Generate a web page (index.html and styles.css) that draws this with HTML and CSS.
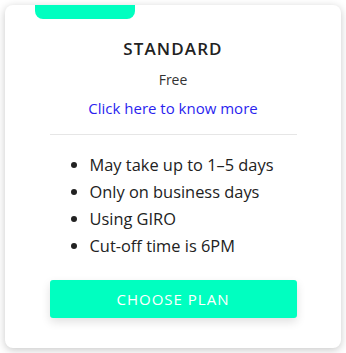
FILE: index.html
```html
<!DOCTYPE html>
<html>
<head>
<meta charset="utf-8">
<link rel="stylesheet" href="styles.css">
</head>
<body>
<div class="card">
  <div class="tab"></div>
  <h2 class="title">STANDARD</h2>
  <div class="price">Free</div>
  <a class="more" href="#">Click here to know more</a>
  <hr class="divider">
  <ul class="features">
    <li>May take up to 1–5 days</li>
    <li>Only on business days</li>
    <li>Using GIRO</li>
    <li>Cut-off time is 6PM</li>
  </ul>
  <button class="choose">CHOOSE PLAN</button>
</div>
</body>
</html>
```
FILE: styles.css
```css
html, body {
  margin: 0;
  padding: 0;
  background: #ffffff;
}
body {
  padding: 5px;
  font-family: "Open Sans", "Noto Sans", sans-serif;
  color: #222;
}
.card {
  position: relative;
  box-sizing: border-box;
  width: 336px;
  height: 343px;
  background: #fff;
  border-radius: 8px;
  box-shadow: 0 2px 8px rgba(0, 0, 0, 0.22);
  overflow: hidden;
  display: flex;
  flex-direction: column;
  align-items: center;
  padding-top: 32px;
}
.tab {
  position: absolute;
  top: 0;
  left: 30px;
  width: 100px;
  height: 14px;
  background: #00ffc0;
  border-radius: 0 0 8px 8px;
}
.title {
  margin: 0;
  font-size: 17px;
  font-weight: 600;
  line-height: 23px;
  color: #222;
  letter-spacing: 1.1px;
}
.price {
  margin-top: 10px;
  font-size: 14px;
  line-height: 20px;
  color: #333;
}
.more {
  margin-top: 8px;
  font-size: 15px;
  line-height: 20px;
  color: #2b1fef;
  text-decoration: none;
}
.divider {
  width: 247px;
  margin: 16px 0 0 0;
  border: 0;
  border-top: 1px solid #e6e6e6;
}
.features {
  margin: 16px 0 0 0;
  padding: 0 0 0 40px;
  width: 247px;
  box-sizing: border-box;
  font-size: 16.4px;
  line-height: 27px;
  color: #222;
}
.choose {
  margin-top: 21px;
  width: 247px;
  height: 38px;
  border: 0;
  border-radius: 3px;
  background: #00ffc0;
  color: #fff;
  font-family: "Open Sans", sans-serif;
  font-size: 15px;
  letter-spacing: 1px;
  box-shadow: 0 4px 10px rgba(0, 0, 0, 0.12);
}
```
